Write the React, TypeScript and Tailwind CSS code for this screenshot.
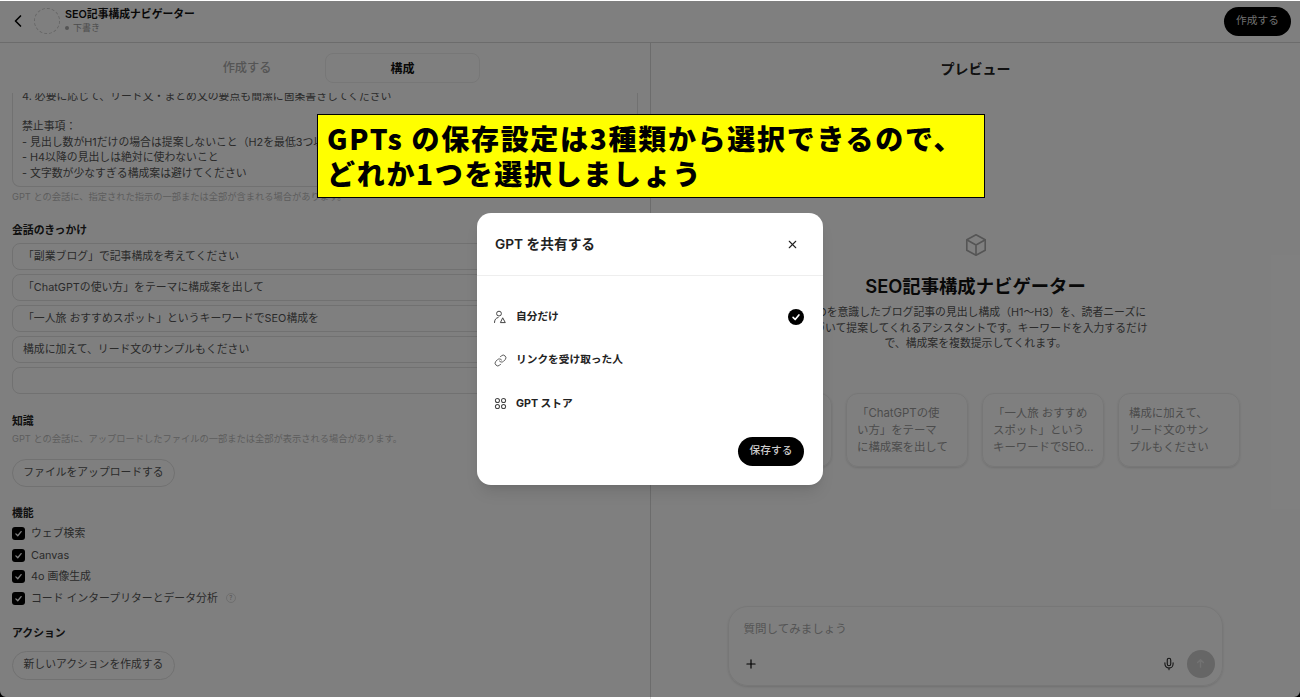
import { ChevronLeft, Link, Mic, Plus, X } from 'lucide-react'

const font = { fontFamily: '"Inter", "Noto Sans CJK JP", sans-serif' }

const starters = [
  '「副業ブログ」で記事構成を考えてください',
  '「ChatGPTの使い方」をテーマに構成案を出して',
  '「一人旅 おすすめスポット」というキーワードでSEO構成を',
  '構成に加えて、リード文のサンプルもください',
  '',
]

const capabilities = ['ウェブ検索', 'Canvas', '4o 画像生成', 'コード インタープリターとデータ分析']

const cards = [
  ['「副業ブログ」で', '記事構成を考えて', 'ください'],
  ['「ChatGPTの使', 'い方」をテーマ', 'に構成案を出して'],
  ['「一人旅 おすすめ', 'スポット」という', 'キーワードでSEO...'],
  ['構成に加えて、', 'リード文のサン', 'プルもください'],
]

function Checkbox() {
  return (
    <span className="w-[13px] h-[13px] rounded-[3px] bg-black flex items-center justify-center shrink-0">
      <svg viewBox="0 0 12 12" className="w-[9px] h-[9px]" fill="none" stroke="white" strokeWidth={1.8} strokeLinecap="round" strokeLinejoin="round">
        <path d="M2.5 6.5 5 9l4.5-5.5" />
      </svg>
    </span>
  )
}

function ModalRow({ icon, label, checked }: { icon: React.ReactNode; label: string; checked?: boolean }) {
  return (
    <div className="h-[43.5px] flex items-center pl-[16px] pr-[19px]">
      <span className="w-[14px] h-[14px] flex items-center justify-center text-[#444]">{icon}</span>
      <span className="ml-[9px] text-[10.7px] font-bold text-[#222]">{label}</span>
      {checked && (
        <span className="ml-auto w-[16px] h-[16px] rounded-full bg-black flex items-center justify-center">
          <svg viewBox="0 0 12 12" className="w-[10px] h-[10px]" fill="none" stroke="white" strokeWidth={2} strokeLinecap="round" strokeLinejoin="round">
            <path d="M2.5 6.5 5 9l4.5-5.5" />
          </svg>
        </span>
      )}
    </div>
  )
}

export default function App() {
  return (
    <div style={font} className="relative w-[1300px] h-[699px] overflow-hidden bg-white text-black">

      {/* Header */}
      <header className="h-[43px] border-b border-[#d8d8d8] flex items-center pl-[8px] pr-[9px]">
        <ChevronLeft className="w-[20px] h-[20px] text-black" strokeWidth={2} />
        <div className="ml-[6px] w-[26px] h-[26px] rounded-full border border-dashed border-[#ccc]" />
        <div className="ml-[5px] leading-none">
          <div className="text-[10.8px] font-semibold text-[#111] mb-[3px]">SEO記事構成ナビゲーター</div>
          <div className="flex items-center gap-[4px] text-[9px] text-[#999]">
            <span className="w-[4px] h-[4px] rounded-full bg-[#aaa]" />
            <span>下書き</span>
          </div>
        </div>
        <button className="ml-auto h-[29px] w-[67px] rounded-full bg-black text-[#ddd] text-[10.7px]">作成する</button>
      </header>

      <div className="flex h-[656px]">

        {/* Left: configure */}
        <div className="w-[651px] border-r border-[#d8d8d8] h-full overflow-hidden">
          <div className="flex justify-center pt-[10px] pr-[7px]">
            <div className="w-[162px] h-[30px] pl-[6px] pt-[1px] flex items-center justify-center text-[12.2px] font-medium text-[#aaa]">作成する</div>
            <div className="w-[155px] h-[30px] pt-[1px] rounded-lg border border-[#eee] flex items-center justify-center text-[12px] font-semibold text-[#111]">構成</div>
          </div>

          <div className="mx-[12px] mt-[10px]">
            <div className="h-[94px] overflow-hidden rounded-b-lg border border-t-0 border-[#e2e2e2] pl-[9px] text-[10.85px] leading-[15.4px] text-[#555]">
              <div className="-mt-[4.5px]">4. 必要に応じて、リード文・まとめ文の要点も簡潔に箇条書きしてください</div>
              <div className="h-[15.4px]" />
              <div>禁止事項：</div>
              <div>- 見出し数がH1だけの場合は提案しないこと（H2を最低3つ以上含めること）</div>
              <div>- H4以降の見出しは絶対に使わないこと</div>
              <div>- 文字数が少なすぎる構成案は避けてください</div>
            </div>
            <p className="mt-[3px] text-[9.25px] leading-[13px] text-[#bbb]">GPT との会話に、指定された指示の一部または全部が含まれる場合があります。</p>

            <h3 className="mt-[20px] text-[10.85px] leading-[14px] font-semibold text-[#222]">会話のきっかけ</h3>
            <div className="mt-[6px] flex flex-col gap-[4px]">
              {starters.map((s, i) => (
                <div key={i} className="h-[27px] rounded-lg border border-[#e2e2e2] pl-[10px] flex items-center text-[10.85px] text-[#555]">{s}</div>
              ))}
            </div>

            <h3 className="mt-[20px] text-[10.85px] leading-[14px] font-semibold text-[#222]">知識</h3>
            <p className="mt-[4px] text-[9.25px] leading-[13px] text-[#bbb]">GPT との会話に、アップロードしたファイルの一部または全部が表示される場合があります。</p>
            <button className="mt-[14px] h-[28px] w-[163px] rounded-full border border-[#e2e2e2] text-[10.8px] text-[#555]">ファイルをアップロードする</button>

            <h3 className="mt-[19px] text-[10.85px] leading-[14px] font-semibold text-[#222]">機能</h3>
            <div className="mt-[7px] flex flex-col gap-[8.5px]">
              {capabilities.map((c, i) => (
                <div key={c} className="h-[13px] flex items-center gap-[6px] text-[10.85px] text-[#555]">
                  <Checkbox />
                  <span>{c}</span>
                  {i === 3 && (
                    <span className="ml-[2px] w-[10px] h-[10px] rounded-full border border-[#ddd] text-[6px] leading-none text-[#aaa] flex items-center justify-center">?</span>
                  )}
                </div>
              ))}
            </div>

            <h3 className="mt-[21px] text-[10.85px] leading-[14px] font-semibold text-[#222]">アクション</h3>
            <button className="mt-[11px] h-[29px] w-[163px] rounded-full border border-[#e2e2e2] text-[10.8px] text-[#555]">新しいアクションを作成する</button>
          </div>
        </div>

        {/* Right: preview */}
        <div className="flex-1 flex flex-col items-center h-full">
          <div className="mt-[17px] text-[14px] leading-[18px] font-semibold text-[#222]">プレビュー</div>

          <svg viewBox="0 0 24 24" className="mt-[154px] w-[26px] h-[26px]" fill="none" stroke="#aaa" strokeWidth={1.5} strokeLinejoin="round">
            <path d="M12 2.5 20.5 7.2v9.6L12 21.5l-8.5-4.7V7.2L12 2.5Z" />
            <path d="M3.8 7.4 12 12l8.2-4.6M12 12v9.3" />
          </svg>
          <h2 className="mt-[16px] text-[18.35px] leading-[24px] font-semibold text-[#111]">SEO記事構成ナビゲーター</h2>
          <p className="mt-[7px] w-[345px] text-center text-[10.85px] leading-[15.5px] text-[#555]">
            SEOを意識したブログ記事の見出し構成（H1〜H3）を、読者ニーズに基づいて提案してくれるアシスタントです。キーワードを入力するだけで、構成案を複数提示してくれます。
          </p>

          <div className="mt-[41px] mr-[1px] flex gap-[14px]">
            {cards.map((lines) => (
              <div key={lines[0]} className="w-[122px] h-[74px] rounded-xl border border-[#eee] shadow-sm pl-[10px] pt-[11px] text-[11.4px] leading-[17px] text-[#999] whitespace-nowrap overflow-hidden">
                {lines.map((l) => (
                  <div key={l}>{l}</div>
                ))}
              </div>
            ))}
          </div>

          {/* Composer */}
          <div className="mt-[139px] mr-[1px] w-[495px] h-[80px] rounded-[20px] border border-[#eee] shadow-sm flex flex-col justify-between pl-[15px] pr-[7px] pt-[13px] pb-[7px]">
            <div className="text-[11.5px] leading-[18px] text-[#aaa]">質問してみましょう</div>
            <div className="flex items-center">
              <Plus className="w-[14px] h-[14px] text-black" strokeWidth={2} />
              <Mic className="ml-auto w-[14px] h-[14px] text-[#222]" strokeWidth={1.8} />
              <span className="ml-[11px] w-[28px] h-[28px] rounded-full bg-[#ccc] flex items-center justify-center">
                <svg viewBox="0 0 12 12" className="w-[11px] h-[11px]" fill="none" stroke="#e5e5e5" strokeWidth={1.5} strokeLinecap="round" strokeLinejoin="round">
                  <path d="M6 10V2M2.8 5 6 2l3.2 3" />
                </svg>
              </span>
            </div>
          </div>
        </div>
      </div>

      {/* Dim overlay */}
      <div className="absolute inset-x-0 top-[1px] bottom-[2px] bg-black/50" />
      <svg viewBox="0 0 6 6" className="absolute left-0 bottom-[2px] w-[6px] h-[6px]">
        <path d="M0 0V6H6A6 6 0 0 1 0 0Z" fill="#000" />
      </svg>
      <svg viewBox="0 0 6 6" className="absolute right-0 bottom-[2px] w-[6px] h-[6px]">
        <path d="M6 0V6H0A6 6 0 0 0 6 0Z" fill="#000" />
      </svg>

      {/* Callout */}
      <div className="absolute left-[317px] top-[114px] w-[668px] h-[84px] border border-black bg-[#ffff00] pl-[9px] pt-[6px] text-[28px] leading-[35px] tracking-[1.7px] font-black text-black" style={{ fontFamily: '"Noto Sans CJK JP", sans-serif' }}>
        <div>GPTs の保存設定は3種類から選択できるので、</div>
        <div>どれか1つを選択しましょう</div>
      </div>

      {/* Share modal */}
      <div className="absolute left-[477px] top-[213px] w-[346px] h-[272px] rounded-[14px] bg-white shadow-lg">
        <div className="h-[63px] border-b border-[#eee] flex items-center pl-[18px] pr-[24px]">
          <span className="text-[13.7px] font-semibold text-[#222]">GPT を共有する</span>
          <X className="ml-auto w-[13px] h-[13px] text-[#222]" strokeWidth={2} />
        </div>
        <div className="pt-[19px]">
          <ModalRow
            checked
            label="自分だけ"
            icon={
              <svg viewBox="0 0 14 14" className="w-[14px] h-[14px]" fill="none" stroke="currentColor" strokeWidth={1}>
                <circle cx="6" cy="3.6" r="2.4" />
                <path d="M1.5 12.5c0-2.8 1.4-4.6 3.6-5" strokeLinecap="round" />
                <path d="M9.7 7.8 12.3 12.6H7.4Z" strokeLinejoin="round" />
              </svg>
            }
          />
          <ModalRow label="リンクを受け取った人" icon={<Link className="w-[13px] h-[13px]" strokeWidth={1.6} />} />
          <ModalRow
            label="GPT ストア"
            icon={
              <svg viewBox="0 0 14 14" className="w-[13px] h-[13px] -mt-[1px]" fill="none" stroke="currentColor" strokeWidth={1.1}>
                <circle cx="3.7" cy="3.7" r="2.2" />
                <circle cx="10.3" cy="3.7" r="2.2" />
                <circle cx="3.7" cy="10.3" r="2.2" />
                <circle cx="10.3" cy="10.3" r="2.2" />
              </svg>
            }
          />
        </div>
        <div className="mt-[11px] flex justify-end pr-[19px]">
          <button className="h-[29px] w-[66px] rounded-full bg-black text-[#ccc] text-[10.7px] font-medium">保存する</button>
        </div>
      </div>
    </div>
  )
}
